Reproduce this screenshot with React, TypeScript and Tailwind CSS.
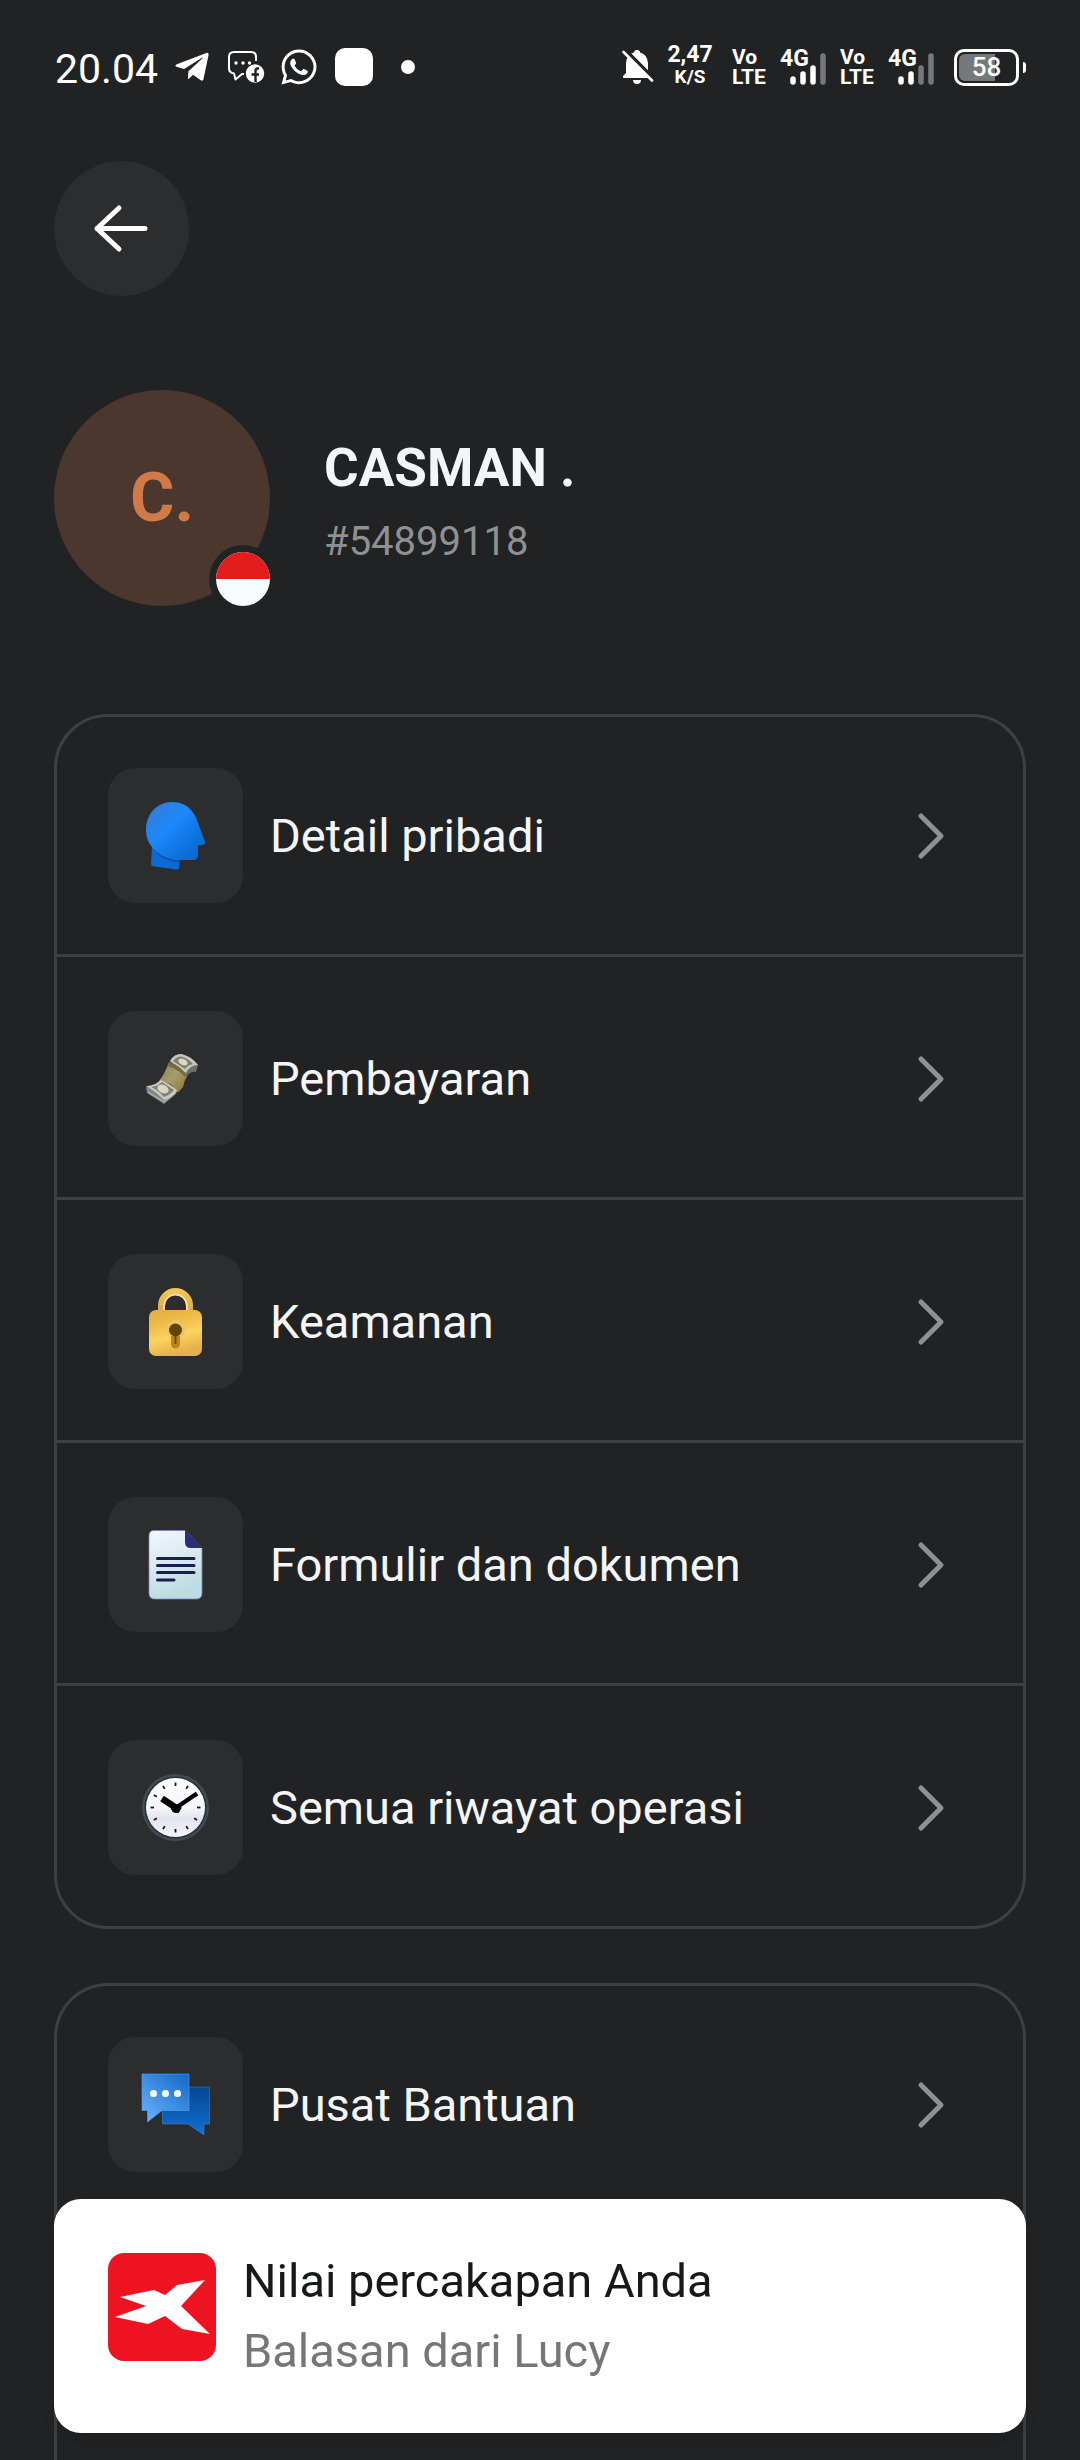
import type { ReactNode } from 'react'
import { FaTelegramPlane, FaWhatsapp } from 'react-icons/fa'

interface MenuItem {
  label: string
  icon: ReactNode
}

interface MenuRowProps {
  item: MenuItem
}

interface SignalProps {
  level: number
}

const HeadIcon = () => (
  <svg viewBox="0 0 135 135" className="size-full" aria-hidden="true">
    <defs>
      <linearGradient id="head" x1="0.1" y1="0.1" x2="0.9" y2="0.9">
        <stop offset="0" stopColor="#2f7fd8" />
        <stop offset="0.4" stopColor="#1c88fb" />
        <stop offset="0.75" stopColor="#0e74e0" />
        <stop offset="1" stopColor="#0b6ad2" />
      </linearGradient>
    </defs>
    <path d="M44 78 L43 96 Q43 98 45 98.300 L69 101.500 Q71 102 71 100 L72 90 Z" fill="#0b6bd3" />
    <path d="M44 80 Q54 93 72 95 L72 91 L50 78 Z" fill="#0854b0" />
    <path d="M38 62 C38 46 49 34 64 34 C78 34 86 42 90 55 L97 74 Q97.500 76.500 95 76.800 L90 77.500 V87 Q90 92 85 92 H71 C58 92 38 82 38 62 Z" fill="url(#head)" />
  </svg>
)

const MoneyIcon = () => (
  <svg viewBox="0 0 135 135" className="size-full" aria-hidden="true">
    <defs>
      <linearGradient id="band" x1="0" y1="0" x2="1" y2="1">
        <stop offset="0" stopColor="#8d8558" />
        <stop offset="0.5" stopColor="#a59c6c" />
        <stop offset="1" stopColor="#8a7a35" />
      </linearGradient>
    </defs>
    <path d="M62 50 Q66 43 73 43 Q83 45 90 54 L88 61 Q83 60 79 65 Z" fill="#6d716a" />
    <path d="M62 50 Q66 43 73 43 Q83 45 90 54 Q82 54 78 62 Z" fill="#c8c9bb" />
    <path d="M65 50 Q69 45 73 45.500 Q80 47 85 53 Q80 54 77 58 Z" fill="#7b7e71" />
    <ellipse cx="75" cy="51" rx="5" ry="3" transform="rotate(25 75 51)" fill="#d6d6ca" />
    <path d="M38 76 L39 82 L56 93 L68 83 L69 79 Z" fill="#7d8989" />
    <path d="M40 81 L56 91 L67 82" fill="none" stroke="#b9c2bf" strokeWidth="1" />
    <path d="M38 75 Q48 75 53 68 L70 79 Q64 87 56 89 Q46 79 38 75 Z" fill="#cacabc" />
    <path d="M43 76 Q50 75 54 71 L66 79 Q62 84 56 86 Q50 79 43 76 Z" fill="#7f8174" />
    <ellipse cx="55" cy="78" rx="6" ry="4" transform="rotate(25 55 78)" fill="#d6d5c7" />
    <path d="M61 51 Q72 54 79 65 Q76 70 75 76 L70 81 Q64 72 52 69 Q57 62 61 51 Z" fill="url(#band)" />
    <path d="M61 51 Q72 54 79 65 L78 67 Q70 58 60 55 Z" fill="#716a43" />
    <path d="M78 65 Q74 74 70 81" fill="none" stroke="#a78322" strokeWidth="1.500" />
  </svg>
)

const LockIcon = () => (
  <svg viewBox="0 0 135 135" className="size-full" aria-hidden="true">
    <defs>
      <linearGradient id="lock" x1="0" y1="0" x2="0.3" y2="1">
        <stop offset="0" stopColor="#e2ad45" />
        <stop offset="0.3" stopColor="#eeb945" />
        <stop offset="0.65" stopColor="#fbd35f" />
        <stop offset="1" stopColor="#e6b04c" />
      </linearGradient>
      <linearGradient id="shackle" x1="0" y1="0" x2="0" y2="1">
        <stop offset="0" stopColor="#f6c64c" />
        <stop offset="1" stopColor="#d2a85b" />
      </linearGradient>
    </defs>
    <path d="M53.500 57 V51.500 A14 14 0 0 1 81.500 51.500 V57" fill="none" stroke="url(#shackle)" strokeWidth="7" />
    <path d="M56 57 V52 A11.500 11.500 0 0 1 79 52 V57" fill="none" stroke="#f7dc9a" strokeWidth="2" />
    <rect x="41" y="56" width="53" height="46" rx="7" fill="url(#lock)" />
    <path d="M67.500 66 A9.500 9.500 0 0 1 72.500 83.500 V90 A4.500 4.500 0 0 1 63 90 V83.500 A9.500 9.500 0 0 1 67.500 66 Z" fill="#e9c46f" />
    <path d="M63 82 H72 V90 A4.500 4.500 0 0 1 63 90 Z" fill="#b98521" />
    <circle cx="67.500" cy="76" r="6.500" fill="#654407" />
    <path d="M67.500 80 V90" stroke="#654407" strokeWidth="1.800" />
  </svg>
)

const DocumentIcon = () => (
  <svg viewBox="0 0 135 135" className="size-full" aria-hidden="true">
    <defs>
      <linearGradient id="sheet" x1="0" y1="0" x2="0.3" y2="1">
        <stop offset="0" stopColor="#f2f8fd" />
        <stop offset="0.5" stopColor="#dbeaf1" />
        <stop offset="1" stopColor="#bcdbe2" />
      </linearGradient>
    </defs>
    <path d="M46 33.500 H77 L94 51 V96 Q94 102 88 102 H47 Q41 102 41 96 V39 Q41 33.500 46 33.500 Z" fill="url(#sheet)" stroke="#7f87bd" strokeWidth="0.800" />
    <path d="M77 33 L94.500 51 H83 Q77 51 77 45 Z" fill="#2c2c78" />
    <path d="M49.500 61.500 H86 M49.500 68.500 H86 M49.500 75.500 H86 M49.500 83 H66" stroke="#182052" strokeWidth="3" strokeLinecap="round" />
  </svg>
)

const ticks = [0, 30, 60, 90, 120, 150, 180, 210, 240, 270, 300, 330]

const ClockIcon = () => (
  <svg viewBox="0 0 135 135" className="size-full" aria-hidden="true">
    <defs>
      <linearGradient id="dial" x1="0" y1="0" x2="0" y2="1">
        <stop offset="0" stopColor="#ffffff" />
        <stop offset="0.5" stopColor="#f6f6fb" />
        <stop offset="0.7" stopColor="#e2e4ee" />
        <stop offset="1" stopColor="#f4f7fb" />
      </linearGradient>
    </defs>
    <circle cx="67.500" cy="67.500" r="33.500" fill="#414c52" />
    <circle cx="67.500" cy="67.500" r="31" fill="#26333b" />
    <circle cx="67.500" cy="67.500" r="29.500" fill="url(#dial)" />
    {ticks.map((angle) => (
      <path key={angle} d="M67.500 42.500 V46" stroke="#15161a" strokeWidth="1.800" transform={`rotate(${angle} 67.5 67.5)`} />
    ))}
    <path d="M64 70.500 L89 53.500" stroke="#000" strokeWidth="4.500" />
    <path d="M54 58.500 L72 70.500" stroke="#000" strokeWidth="6.500" />
    <circle cx="68" cy="68.500" r="4.500" fill="#000" />
  </svg>
)

const ChatIcon = () => (
  <svg viewBox="0 0 135 135" className="size-full" aria-hidden="true">
    <defs>
      <linearGradient id="front" x1="1" y1="0" x2="0.1" y2="1">
        <stop offset="0" stopColor="#1767c4" />
        <stop offset="0.5" stopColor="#3c8ce3" />
        <stop offset="1" stopColor="#69b1fb" />
      </linearGradient>
      <linearGradient id="back" x1="0.6" y1="0" x2="0.6" y2="1">
        <stop offset="0" stopColor="#07468f" />
        <stop offset="1" stopColor="#1070d6" />
      </linearGradient>
    </defs>
    <path d="M54.500 50 H101.500 V87 H96 V98 L80 87 H54.500 Z" fill="url(#back)" stroke="#2f80d6" strokeWidth="0.600" />
    <path d="M34 37 H81 V73.500 H54 L39.500 85 V73.500 H34 Z" fill="url(#front)" stroke="#5da3ee" strokeWidth="0.600" />
    <circle cx="45.500" cy="56.500" r="3.500" fill="#fff" />
    <circle cx="57.500" cy="56.500" r="3.500" fill="#fff" />
    <circle cx="69.500" cy="56.500" r="3.500" fill="#fff" />
  </svg>
)

const accountItems: MenuItem[] = [
  { label: 'Detail pribadi', icon: <HeadIcon /> },
  { label: 'Pembayaran', icon: <MoneyIcon /> },
  { label: 'Keamanan', icon: <LockIcon /> },
  { label: 'Formulir dan dokumen', icon: <DocumentIcon /> },
  { label: 'Semua riwayat operasi', icon: <ClockIcon /> },
]

const helpItems: MenuItem[] = [
  { label: 'Pusat Bantuan', icon: <ChatIcon /> },
]

function MenuRow({ item }: MenuRowProps) {
  return (
    <li className="border-t-[3px] border-[#3e3f41] first:border-t-0">
      <button type="button" className="flex w-full items-center pt-[54px] pb-[51px] pl-[51px] pr-[72px] text-left [li:first-child>&]:pt-[51px]">
        <span className="size-[135px] shrink-0 rounded-[27px] bg-[#2c2d2f]">{item.icon}</span>
        <span className="ml-[27px] flex-1 text-[47px] leading-[56px]">{item.label}</span>
        <svg viewBox="0 0 48 48" className="size-12 shrink-0" fill="none" stroke="#8f9091" strokeWidth="5" strokeLinecap="round" strokeLinejoin="round" aria-hidden="true">
          <path d="M18 4 L38 24 L18 44" />
        </svg>
      </button>
    </li>
  )
}

function Signal({ level }: SignalProps) {
  return (
    <div className="relative h-9 w-12">
      <span className="absolute top-0 left-0 text-[23px] leading-5 font-bold">4G</span>
      <svg viewBox="0 0 48 36" className="size-full" strokeWidth="5.500" strokeLinecap="round" aria-hidden="true">
        <path d="M13 30 V33" stroke={level > 0 ? '#fff' : '#777879'} />
        <path d="M23 25 V33" stroke={level > 1 ? '#fff' : '#777879'} />
        <path d="M33 19 V33" stroke={level > 2 ? '#fff' : '#777879'} />
        <path d="M43 7 V33" stroke={level > 3 ? '#fff' : '#777879'} />
      </svg>
    </div>
  )
}

function VoLte() {
  return (
    <div className="w-9 text-[21px] leading-5 font-bold">
      <p>Vo</p>
      <p>LTE</p>
    </div>
  )
}

function StatusBar() {
  return (
    <div className="flex h-[134px] items-center justify-between text-white">
      <div className="flex items-center pl-px">
        <time className="w-[118px] pt-1 text-[41px] leading-[48px]">20.04</time>
        <FaTelegramPlane className="size-[38px]" />
        <svg viewBox="0 0 38 34" className="ml-4 h-[34px] w-[38px]" fill="none" aria-hidden="true">
          <path d="M29 11 V7 Q29 2 24 2 H7 Q2 2 2 7 V18 Q2 23 7 23.500 L8.500 29.500 L15 24 H17" stroke="#fff" strokeWidth="2" strokeLinejoin="round" />
          <circle cx="9" cy="13" r="1.700" fill="#fff" />
          <circle cx="16" cy="13" r="1.700" fill="#fff" />
          <circle cx="22.500" cy="13" r="1.700" fill="#fff" />
          <circle cx="28" cy="23.500" r="9.200" fill="#fff" />
          <path d="M32 18.500 H30.500 Q28.500 18.500 28.500 21 V32 M24.500 24.500 H32" stroke="#212224" strokeWidth="2.400" />
        </svg>
        <FaWhatsapp className="ml-[14px] size-[40px]" />
        <span className="ml-4 size-[38px] rounded-[10px] bg-white" />
        <span className="ml-7 size-[14px] rounded-full bg-white" />
      </div>
      <div className="flex items-center">
        <svg viewBox="0 0 32 36" className="h-9 w-8" aria-hidden="true">
          <path d="M1 29 V27 L4 24 V14 Q5 5 12 3.500 Q12 1 15 1 Q18 1 18 3.500 Q25 5 26 14 V24 L29 27 V29 Z M11 31 H19 Q19 35 15 35 Q11 35 11 31 Z" fill="#fff" />
          <path d="M2 0 L32 30" stroke="#212224" strokeWidth="4" />
          <path d="M1.500 3 L30 31.500" stroke="#fff" strokeWidth="2.600" strokeLinecap="round" />
        </svg>
        <div className="mx-3 w-12 pb-1 text-center font-bold">
          <p className="text-[23px] leading-6">2,47</p>
          <p className="text-[19px] leading-5">K/S</p>
        </div>
        <div className="ml-[6px] flex items-center gap-3">
          <VoLte />
          <Signal level={3} />
          <VoLte />
          <Signal level={2} />
        </div>
        <div className="ml-[18px] flex items-center gap-1">
          <div className="relative flex h-[37px] w-[65px] items-center justify-center rounded-[10px] border-[3px] border-white">
            <span className="absolute inset-y-[2px] left-[2px] w-[36px] rounded-l-[6px] bg-[#777879]" />
            <span className="relative text-[26px] leading-7 font-medium">58</span>
          </div>
          <span className="h-[11px] w-[3px] rounded-r-sm bg-white" />
        </div>
      </div>
    </div>
  )
}

function Toast() {
  return (
    <button type="button" className="fixed inset-x-[54px] bottom-[27px] flex items-start rounded-[27px] bg-white px-[54px] pt-[47px] pb-[47px] text-left shadow-lg">
      <svg viewBox="0 0 108 108" className="mt-[7px] size-[108px] shrink-0" aria-hidden="true">
        <rect width="108" height="108" rx="16" fill="#ee1320" />
        <path d="M12 44 L46 37 L57 42 L69 32 L97 27 L73 53 L102 81 L74 76 L57 63 L40 71 L7 64 L38 53 Z" fill="#fff" />
      </svg>
      <span className="ml-[27px] flex flex-col text-[47px] leading-[70px]">
        <span className="text-[#17181a]">Nilai percakapan Anda</span>
        <span className="text-[#757677]">Balasan dari Lucy</span>
      </span>
    </button>
  )
}

export default function App() {

  return (
    <div className="flex min-h-screen flex-col bg-[#212224] px-[54px] font-[Roboto,sans-serif] text-[#f4f5f7]">
      <StatusBar />
      <header className="pt-[27px]">
        <button type="button" aria-label="Kembali" className="block size-[135px] rounded-full bg-[#2c2d2f]">
          <svg viewBox="0 0 135 135" className="size-full" fill="none" stroke="#fff" strokeWidth="5" strokeLinecap="round" strokeLinejoin="round" aria-hidden="true">
            <path d="M91 67.500 H43 M65 47 L43 67.500 L65 88" />
          </svg>
        </button>
      </header>
      <main className="flex flex-1 flex-col">
        <section className="mt-[94px] flex items-center gap-[54px]">
          <div className="relative flex size-[216px] items-center justify-center rounded-full bg-[#4c372f]">
            <span className="text-[68px] leading-[80px] font-bold text-[#d07a48]">C.</span>
            <span className="absolute -right-[7px] -bottom-[7px] size-[68px] overflow-hidden rounded-full bg-[#212224] p-[7px]">
              <span className="flex size-full flex-col overflow-hidden rounded-full bg-[#f7fcff]">
                <span className="h-1/2 bg-[#e31d1c]" />
              </span>
            </span>
          </div>
          <div className="pt-2">
            <h1 className="text-[53px] leading-[72px] font-bold">CASMAN .</h1>
            <p className="mt-2 text-[40px] leading-[60px] text-[#8f9091]">#54899118</p>
          </div>
        </section>
        <ul className="mt-[108px] rounded-[54px] border-[3px] border-[#3e3f41]">
          {accountItems.map((item) => <MenuRow key={item.label} item={item} />)}
        </ul>
        <ul className="mt-[54px] flex-1 rounded-t-[54px] border-[3px] border-b-0 border-[#3e3f41]">
          {helpItems.map((item) => <MenuRow key={item.label} item={item} />)}
        </ul>
      </main>
      <Toast />
    </div>
  )
}
